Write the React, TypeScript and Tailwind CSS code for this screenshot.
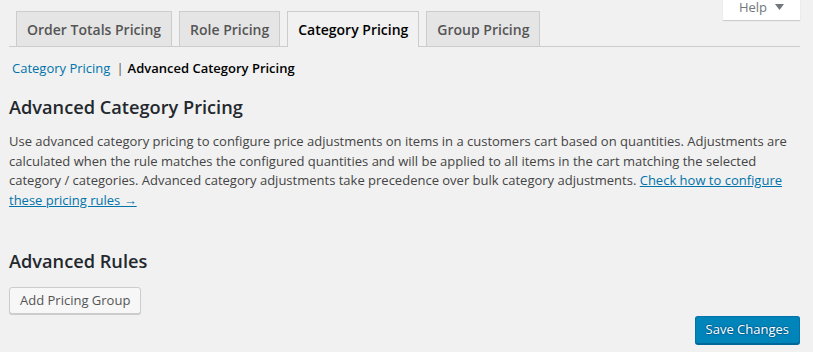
const tabs = [
  { label: "Order Totals Pricing", active: false },
  { label: "Role Pricing", active: false },
  { label: "Category Pricing", active: true },
  { label: "Group Pricing", active: false },
];

export default function App() {
  return (
    <div
      className="relative h-[352px] w-full overflow-hidden bg-[#f1f1f1] text-[13px] text-[#444]"
      style={{ fontFamily: '"Open Sans", "Liberation Sans", sans-serif' }}
    >
      {/* help tab hangs over the top of the page */}
      <div className="absolute right-[13px] top-[-8px] flex h-[28px] w-[77px] items-end justify-center gap-[8px] bg-white pb-[4px] shadow-[0_1px_1px_0_rgba(0,0,0,0.15)]">
        <span className="leading-[18px] text-[#72777c]">Help</span>
        <svg width="9" height="6" viewBox="0 0 9 6" className="mb-[6px]">
          <path d="M0 0h9L4.5 6z" fill="#72777c" />
        </svg>
      </div>

      <div className="flex flex-col pl-[9px] pr-[13px]">
        <nav className="mt-[11px] flex gap-[7px] border-b border-[#ccc] pl-[7px]">
          {tabs.map((t) => (
            <div
              key={t.label}
              className={
                t.active
                  ? "-mb-px flex h-[36px] items-center border border-b-0 border-[#ccc] bg-[#f1f1f1] px-[10px] text-[14px] font-semibold text-black"
                  : "flex h-[35px] items-center border border-b-0 border-[#ccc] bg-[#e5e5e5] px-[10px] text-[14px] font-semibold text-[#555]"
              }
            >
              {t.label}
            </div>
          ))}
        </nav>

        <div className="ml-[3px] mt-[11px] flex items-center leading-[20px]">
          <a className="text-[#0073aa]">Category Pricing</a>
          <span className="ml-[6px] mr-[4px] text-[#555]">|</span>
          <span className="font-semibold text-black">Advanced Category Pricing</span>
        </div>

        <h2 className="mt-[17px] text-[18.2px] font-semibold leading-[24px] text-[#23282d]">
          Advanced Category Pricing
        </h2>

        <p className="mt-[13px] leading-[19.5px] text-[#444]">
          Use advanced category pricing to configure price adjustments on items in a customers cart
          based on quantities. Adjustments are calculated when the rule matches the configured
          quantities and will be applied to all items in the cart matching the selected category /
          categories. Advanced category adjustments take precedence over bulk category adjustments.{" "}
          <a className="text-[#0073aa] underline">Check how to configure these pricing rules →</a>
        </p>

        <h2 className="mt-[39px] text-[18.2px] font-semibold leading-[24px] text-[#23282d]">
          Advanced Rules
        </h2>

        <div className="mt-[14px] flex">
          <button className="h-[27px] rounded-[3px] border border-[#ccc] bg-[#f7f7f7] px-[10px] text-[13px] text-[#555] shadow-[0_1px_0_#ccc]">
            Add Pricing Group
          </button>
        </div>

        <div className="mt-[2px] flex justify-end">
          <button className="h-[28px] rounded-[3px] border border-[#0073aa] border-b-[#006799] bg-[#0085ba] px-[10px] text-[13px] text-white shadow-[0_1px_0_#006799] [text-shadow:0_-1px_1px_#006799,1px_0_1px_#006799,0_1px_1px_#006799,-1px_0_1px_#006799]">
            Save Changes
          </button>
        </div>
      </div>
    </div>
  );
}
